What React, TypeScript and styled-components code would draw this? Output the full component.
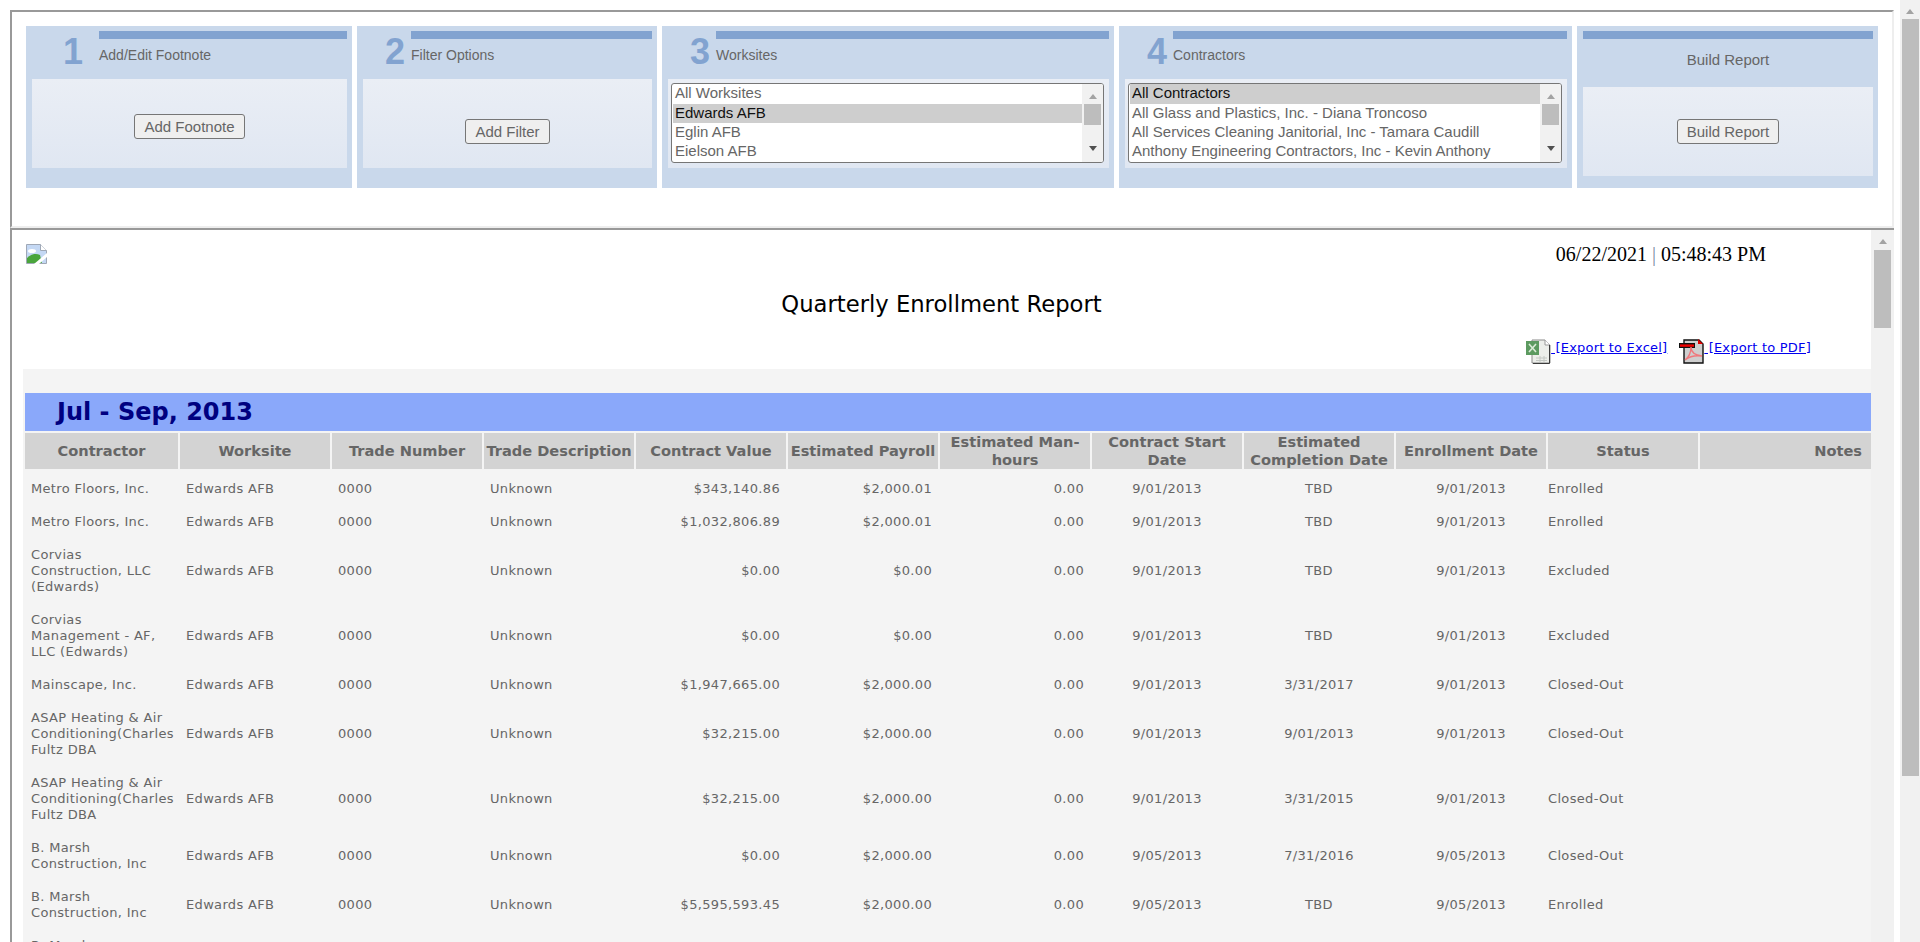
import React from "react";
import styled, { createGlobalStyle } from "styled-components";

const Global = createGlobalStyle`
  html, body { margin: 0; padding: 0; height: 942px; overflow: hidden; background: #fff; }
  #root { height: 942px; }
  * { box-sizing: border-box; }
`;

const Page = styled.div`
  display: flex;
  height: 942px;
  overflow: hidden;
`;
const Frames = styled.div`
  width: 1900px;
  padding: 10px 6px 0 10px;
  display: flex;
  flex-direction: column;
  min-height: 0;
`;
const TopFrame = styled.div`
  height: 218px;
  flex: none;
  border-top: 2px solid #999;
  border-left: 2px solid #999;
  border-right: 2px solid #eee;
  border-bottom: 2px solid #eee;
  padding: 14px 0 0 14px;
  font-family: "Liberation Sans", Arial, sans-serif;
  color: #666;
`;
const Steps = styled.div`
  display: flex;
  gap: 5px;
`;
const Step = styled.div<{ $w: number }>`
  width: ${(p) => p.$w}px;
  height: 162px;
  background: #c9d8eb;
  flex: none;
`;
const StepHead = styled.div`
  height: 53px;
  display: flex;
  padding: 5px 5px 0 0;
`;
const StepNumberCol = styled.div<{ $w: number; $pad: number }>`
  width: ${(p) => p.$w}px;
  flex: none;
  padding-left: ${(p) => p.$pad}px;
  font-weight: bold;
  font-size: 36px;
  line-height: 41px;
  color: #82a3d0;
`;
const StepTitleCol = styled.div`
  flex: 1;
`;
const Bar = styled.div`
  height: 8px;
  background: #82a3d0;
`;
const StepLabel = styled.div`
  font-size: 14px;
  line-height: 16px;
  margin-top: 8px;
`;
const StepBody = styled.div<{ $dropBy?: number }>`
  height: 89px;
  margin: 0 5px 0 6px;
  padding-top: ${(p) => (p.$dropBy ?? 0) * 2}px;
  background: linear-gradient(#eaeef5, #e0e7f2);
  display: flex;
  justify-content: center;
  align-items: center;
`;
const ListBody = styled(StepBody)`
  align-items: flex-start;
  padding: 4px 5px 0 3px;
`;
const BuildHead = styled.div`
  height: 61px;
  padding: 5px 5px 0 6px;
  text-align: center;
`;
const BuildTitle = styled.div`
  font-size: 15px;
  line-height: 18px;
  margin-top: 12px;
`;
const Btn = styled.button`
  height: 25px;
  padding: 0 9px;
  border: 1px solid #767676;
  border-radius: 3px;
  background: #efefef;
  color: #666;
  font-family: "Liberation Sans", Arial, sans-serif;
  font-size: 15px;
`;
const ListBox = styled.div`
  flex: 1;
  height: 80px;
  border: 1px solid #767676;
  border-radius: 3px;
  background: #fff;
  display: flex;
  overflow: hidden;
  padding: 0 0 0 1px;
`;
const Options = styled.div`
  flex: 1;
  min-width: 0;
  font-size: 15px;
`;
const Option = styled.div<{ $sel?: boolean }>`
  height: 19px;
  line-height: 18px;
  padding-left: 2px;
  white-space: nowrap;
  background: ${(p) => (p.$sel ? "#cecece" : "transparent")};
  color: ${(p) => (p.$sel ? "#111" : "#666")};
  &:first-child { height: 20px; line-height: 18px; }
`;
const ListScroll = styled.div`
  width: 21px;
  flex: none;
  background: #f1f1f1;
  display: flex;
  flex-direction: column;
  align-items: center;
  padding: 0 2px;
`;
const ListThumb = styled.div`
  width: 17px;
  height: 21px;
  background: #bdbdbd;
  margin-top: 5px;
`;
const ArrowUp = styled.div<{ $c?: string; $top: number }>`
  width: 0;
  height: 0;
  flex: none;
  margin-top: ${(p) => p.$top}px;
  border-left: 4.5px solid transparent;
  border-right: 4.5px solid transparent;
  border-bottom: 5px solid ${(p) => p.$c ?? "#a3a3a3"};
`;
const ArrowDown = styled.div<{ $top: number }>`
  width: 0;
  height: 0;
  flex: none;
  margin-top: ${(p) => p.$top}px;
  border-left: 4.5px solid transparent;
  border-right: 4.5px solid transparent;
  border-top: 5px solid #505050;
`;

const BottomFrame = styled.div`
  flex: 1;
  min-height: 0;
  display: flex;
  border-top: 2px solid #999;
  border-left: 2px solid #999;
`;
const Report = styled.div`
  flex: 1;
  min-width: 0;
  overflow: hidden;
`;
const InnerScroll = styled.div`
  width: 23px;
  flex: none;
  background: #f1f1f1;
  display: flex;
  flex-direction: column;
  align-items: center;
`;
const InnerThumb = styled.div`
  width: 17px;
  height: 78px;
  margin: 6px 3px 0 3px;
  background: #bdbdbd;
`;
const OuterScroll = styled.div`
  width: 20px;
  flex: none;
  background: #f1f1f1;
  display: flex;
  flex-direction: column;
  align-items: center;
`;
const OuterThumb = styled.div`
  width: 17px;
  height: 757px;
  margin-top: 5px;
  background: #bdbdbd;
`;

const ReportTop = styled.div`
  height: 139px;
  padding: 14px 0 0 14px;
`;
const TopLine = styled.div`
  display: flex;
  justify-content: space-between;
  height: 21px;
`;
const Stamp = styled.div`
  font-family: "Liberation Serif", "Times New Roman", serif;
  font-size: 20px;
  line-height: 21px;
  color: #000;
  margin-right: 105px;
`;
const StampBar = styled.span`
  color: #7a8aa0;
`;
const Heading = styled.div`
  font-family: "DejaVu Sans", Verdana, sans-serif;
  font-size: 22.7px;
  line-height: 24px;
  color: #000;
  text-align: center;
  margin: 27px 0 0 -14px;
`;
const Exports = styled.div`
  display: flex;
  justify-content: flex-end;
  gap: 12px;
  margin: 23px 60px 0 0;
  font-family: "DejaVu Sans", Verdana, sans-serif;
  font-size: 13px;
  line-height: 17px;
  letter-spacing: 0.2px;
`;
const ExportLink = styled.a`
  color: #0000ee;
  text-decoration: underline;
  white-space: pre;
  display: block;
  svg { vertical-align: top; }
`;

const Gray = styled.div`
  margin-left: 11px;
  background: #f4f4f4;
  padding-top: 24px;
  min-height: 600px;
`;
const Band = styled.div`
  margin-left: 2px;
  height: 38px;
  background: #8aa8fa;
  padding-left: 32px;
  font-family: "DejaVu Sans", Verdana, sans-serif;
  font-weight: bold;
  font-size: 24px;
  line-height: 38px;
  color: #000080;
`;
const Table = styled.table`
  width: 1850px;
  table-layout: fixed;
  border-collapse: separate;
  border-spacing: 2px;
  font-family: "DejaVu Sans", Verdana, sans-serif;
  color: #666;
  tbody tr:first-child td { padding-top: 10px; }
`;
const Th = styled.th<{ $align?: string }>`
  height: 36px;
  padding: 0 ${(p) => (p.$align === "right" ? "9px" : "0")} 0 0;
  background: #d3d3d3;
  font-size: 14.6px;
  line-height: 18px;
  font-weight: bold;
  text-align: ${(p) => p.$align ?? "center"};
  white-space: normal;
`;
const Td = styled.td<{ $align?: string; $pad?: number }>`
  padding: 8px 6px 7px ${(p) => p.$pad ?? 6}px;
  font-size: 13px;
  letter-spacing: 0.33px;
  line-height: 16px;
  text-align: ${(p) => p.$align ?? "left"};
  vertical-align: middle;
`;

const ExcelIcon = () => (
  <svg width="25" height="25" viewBox="0 0 25 25">
    <path d="M6 1h13l5 5v18H6z" fill="#eceeea" stroke="#8b8b8b" />
    <path d="M19 1v5h5" fill="#fff" stroke="#9a9a9a" />
    <path d="M23.5 6v18.5H7" fill="none" stroke="#3c3c3c" strokeWidth="1" />
    <rect x="0" y="2" width="13" height="14" fill="#5c9a60" />
    <path d="M3 5l7 8M10 5l-7 8" stroke="#dcebd8" strokeWidth="1.6" />
    <path d="M10 19h11M10 21.5h11M14 17v6M18 17v6" stroke="#c4c8c4" strokeWidth="1" />
  </svg>
);
const PdfIcon = () => (
  <svg width="25" height="25" viewBox="0 0 25 25">
    <path d="M5 1h15l4 4v19H5z" fill="#cfcfcf" stroke="#111" strokeWidth="1.4" />
    <path d="M19 0l5 5h-5z" fill="#e00000" />
    <rect x="0" y="4" width="16" height="5" fill="#111" />
    <rect x="1" y="5.4" width="14" height="2.4" fill="#f00000" />
    <path d="M6 21c4-3 6-8 6-13 0 5 3 8 11 9-7-1-12 0-17 4z" fill="none" stroke="#f0787c" strokeWidth="1.4" />
  </svg>
);
const BrokenImage = () => (
  <svg width="21" height="20" viewBox="0 0 21 20">
    <path d="M0.5 0.5h14l6 6v13H0.5z" fill="#c4d8f4" stroke="#9fa8b6" />
    <path d="M14.5 0.5v6h6" fill="#fff" stroke="#9fa8b6" />
    <ellipse cx="6" cy="7" rx="4" ry="2" fill="#fff" />
    <path d="M1 19v-5c4-4 9-5 13-3l2 8z" fill="#4aa53c" />
    <path d="M21 9L8 20h5l8-7z" fill="#fff" />
  </svg>
);

type RowData = [string, string, string, string, string, string, string];
const rows: RowData[] = [
  ["Metro Floors, Inc.", "$343,140.86", "$2,000.01", "9/01/2013", "TBD", "9/01/2013", "Enrolled"],
  ["Metro Floors, Inc.", "$1,032,806.89", "$2,000.01", "9/01/2013", "TBD", "9/01/2013", "Enrolled"],
  ["Corvias Construction, LLC (Edwards)", "$0.00", "$0.00", "9/01/2013", "TBD", "9/01/2013", "Excluded"],
  ["Corvias Management - AF, LLC (Edwards)", "$0.00", "$0.00", "9/01/2013", "TBD", "9/01/2013", "Excluded"],
  ["Mainscape, Inc.", "$1,947,665.00", "$2,000.00", "9/01/2013", "3/31/2017", "9/01/2013", "Closed-Out"],
  ["ASAP Heating & Air Conditioning(Charles Fultz DBA", "$32,215.00", "$2,000.00", "9/01/2013", "9/01/2013", "9/01/2013", "Closed-Out"],
  ["ASAP Heating & Air Conditioning(Charles Fultz DBA", "$32,215.00", "$2,000.00", "9/01/2013", "3/31/2015", "9/01/2013", "Closed-Out"],
  ["B. Marsh Construction, Inc", "$0.00", "$2,000.00", "9/05/2013", "7/31/2016", "9/05/2013", "Closed-Out"],
  ["B. Marsh Construction, Inc", "$5,595,593.45", "$2,000.00", "9/05/2013", "TBD", "9/05/2013", "Enrolled"],
  ["B. Marsh Construction, Inc", "$0.00", "$2,000.00", "9/05/2013", "TBD", "9/05/2013", "Enrolled"],
];

const headers: [string, number][] = [
  ["Contractor", 153],
  ["Worksite", 150],
  ["Trade Number", 150],
  ["Trade Description", 150],
  ["Contract Value", 150],
  ["Estimated Payroll", 150],
  ["Estimated Man-hours", 150],
  ["Contract Start Date", 150],
  ["Estimated Completion Date", 150],
  ["Enrollment Date", 150],
  ["Status", 150],
  ["Notes", 171],
];

const worksites = ["All Worksites", "Edwards AFB", "Eglin AFB", "Eielson AFB"];
const contractors = [
  "All Contractors",
  "All Glass and Plastics, Inc. - Diana Troncoso",
  "All Services Cleaning Janitorial, Inc - Tamara Caudill",
  "Anthony Engineering Contractors, Inc - Kevin Anthony",
];

const List = ({ items, selected }: { items: string[]; selected: number }) => (
  <ListBox>
    <Options>
      {items.map((t, i) => (
        <Option key={t} $sel={i === selected}>{t}</Option>
      ))}
    </Options>
    <ListScroll>
      <ArrowUp $top={10} />
      <ListThumb />
      <ArrowDown $top={21} />
    </ListScroll>
  </ListBox>
);

export default function App() {
  return (
    <Page>
      <Global />
      <Frames>
        <TopFrame>
          <Steps>
            <Step $w={326}>
              <StepHead>
                <StepNumberCol $w={73} $pad={37}>1</StepNumberCol>
                <StepTitleCol><Bar /><StepLabel>Add/Edit Footnote</StepLabel></StepTitleCol>
              </StepHead>
              <StepBody $dropBy={3}><Btn>Add Footnote</Btn></StepBody>
            </Step>
            <Step $w={300}>
              <StepHead>
                <StepNumberCol $w={54} $pad={28}>2</StepNumberCol>
                <StepTitleCol><Bar /><StepLabel>Filter Options</StepLabel></StepTitleCol>
              </StepHead>
              <StepBody $dropBy={8}><Btn>Add Filter</Btn></StepBody>
            </Step>
            <Step $w={452}>
              <StepHead>
                <StepNumberCol $w={54} $pad={28}>3</StepNumberCol>
                <StepTitleCol><Bar /><StepLabel>Worksites</StepLabel></StepTitleCol>
              </StepHead>
              <ListBody><List items={worksites} selected={1} /></ListBody>
            </Step>
            <Step $w={453}>
              <StepHead>
                <StepNumberCol $w={54} $pad={28}>4</StepNumberCol>
                <StepTitleCol><Bar /><StepLabel>Contractors</StepLabel></StepTitleCol>
              </StepHead>
              <ListBody><List items={contractors} selected={0} /></ListBody>
            </Step>
            <Step $w={301}>
              <BuildHead>
                <Bar />
                <BuildTitle>Build Report</BuildTitle>
              </BuildHead>
              <StepBody><Btn>Build Report</Btn></StepBody>
            </Step>
          </Steps>
        </TopFrame>
        <BottomFrame>
          <Report>
            <ReportTop>
              <TopLine>
                <BrokenImage />
                <Stamp>06/22/2021 <StampBar>|</StampBar> 05:48:43 PM</Stamp>
              </TopLine>
              <Heading>Quarterly Enrollment Report</Heading>
              <Exports>
                <ExportLink href="#"><ExcelIcon /> [Export to Excel]</ExportLink>
                <ExportLink href="#"><PdfIcon /> [Export to PDF]</ExportLink>
              </Exports>
            </ReportTop>
            <Gray>
              <Band>Jul - Sep, 2013</Band>
              <Table>
                <colgroup>
                  {headers.map(([h, w]) => (
                    <col key={h} style={{ width: w }} />
                  ))}
                </colgroup>
                <thead>
                  <tr>
                    {headers.map(([h]) => (
                      <Th key={h} $align={h === "Notes" ? "right" : undefined}>{h}</Th>
                    ))}
                  </tr>
                </thead>
                <tbody>
                  {rows.map((r, i) => (
                    <tr key={i}>
                      <Td>{r[0]}</Td>
                      <Td>Edwards AFB</Td>
                      <Td>0000</Td>
                      <Td>Unknown</Td>
                      <Td $align="right">{r[1]}</Td>
                      <Td $align="right">{r[2]}</Td>
                      <Td $align="right">0.00</Td>
                      <Td $align="center">{r[3]}</Td>
                      <Td $align="center">{r[4]}</Td>
                      <Td $align="center">{r[5]}</Td>
                      <Td $pad={0}>{r[6]}</Td>
                      <Td />
                    </tr>
                  ))}
                </tbody>
              </Table>
            </Gray>
          </Report>
          <InnerScroll>
            <ArrowUp $top={9} />
            <InnerThumb />
          </InnerScroll>
        </BottomFrame>
      </Frames>
      <OuterScroll>
        <ArrowUp $top={9} />
        <OuterThumb />
      </OuterScroll>
    </Page>
  );
}
